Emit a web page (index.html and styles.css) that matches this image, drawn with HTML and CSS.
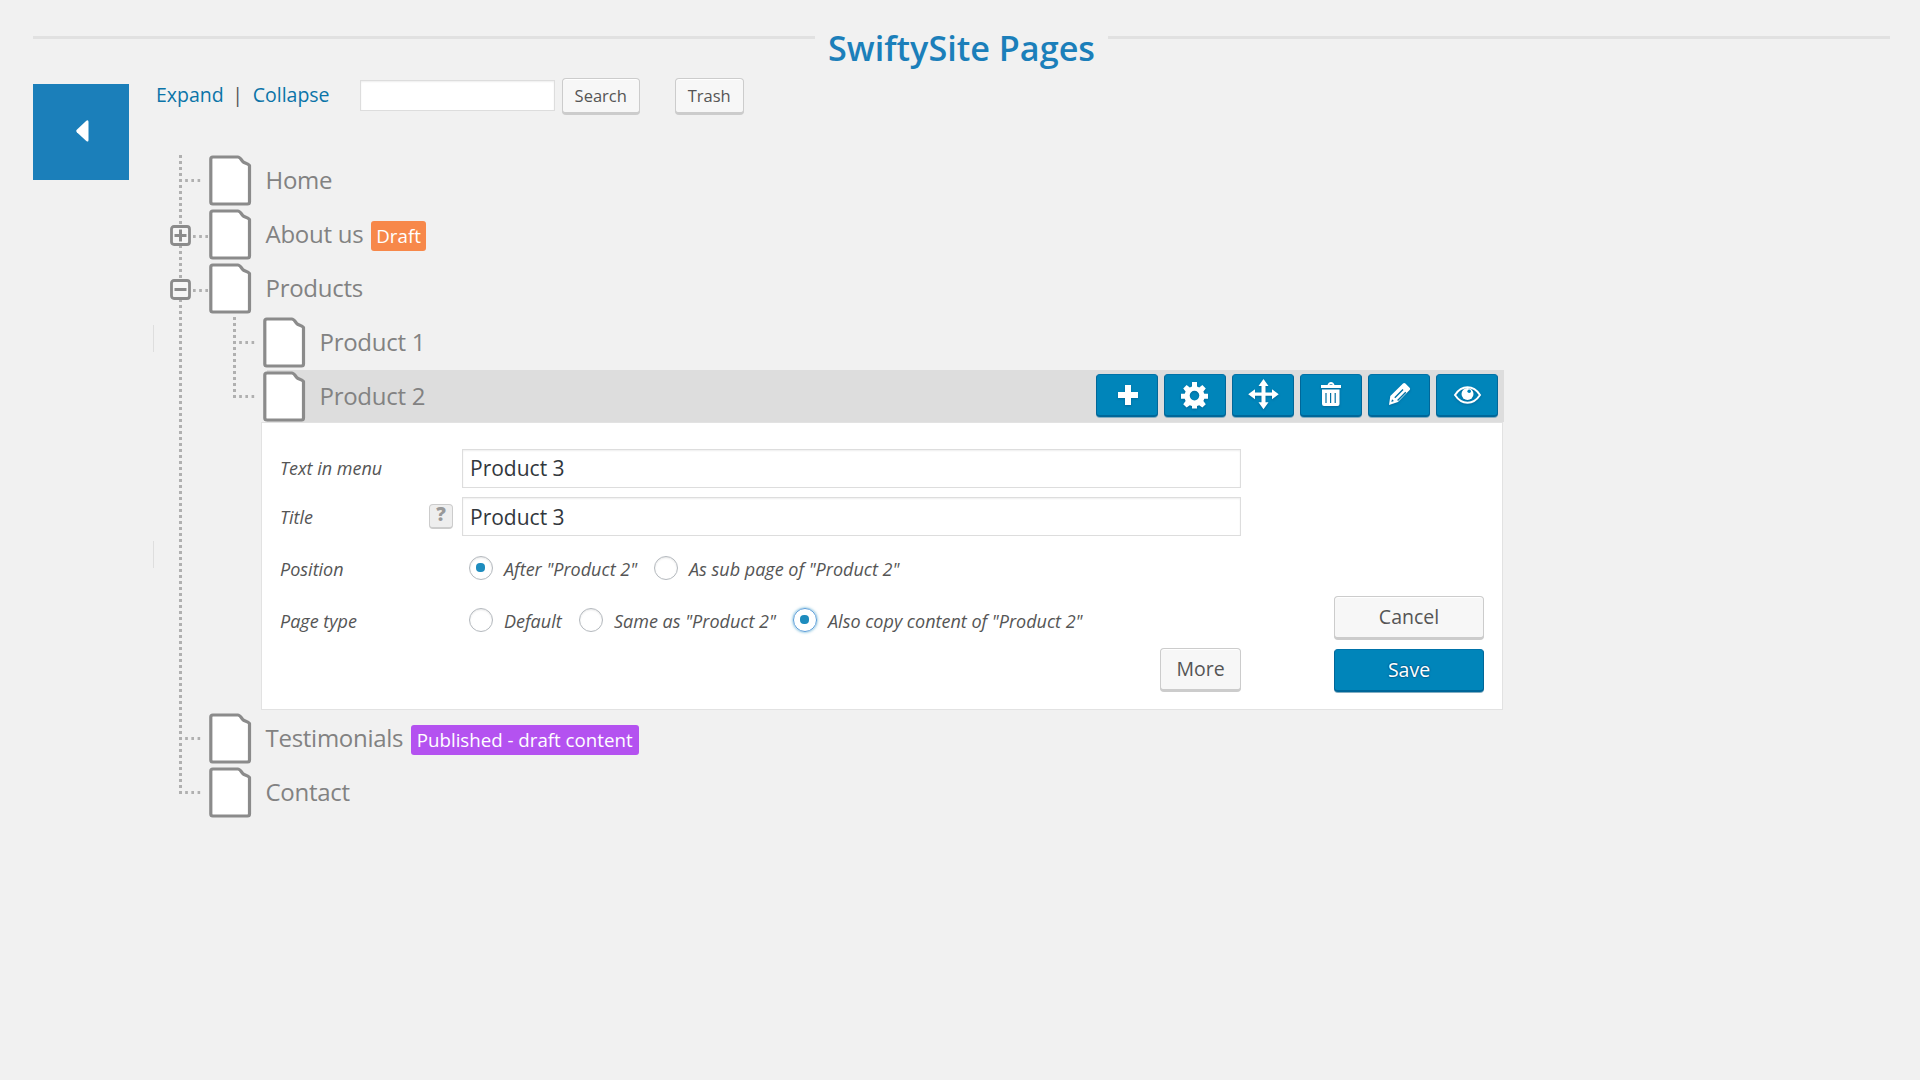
FILE: index.html
```html
<!DOCTYPE html>
<html lang="en">
<head>
<meta charset="utf-8">
<title>SwiftySite Pages</title>
<link rel="stylesheet" href="styles.css">
</head>
<body>
<svg class="sprite" aria-hidden="true">
  <symbol id="page" viewBox="0 0 44 52"><path d="M4.800 3H29.800C31.800 3 32.800 5 34.500 7.200C36.300 9.600 39.300 9 41.500 11.500V48Q41.500 50 39.500 50H4.800Q2.800 50 2.800 48V5Q2.800 3 4.800 3Z" fill="#fff" stroke="#8b8b8b" stroke-width="3.200" stroke-linejoin="round"/></symbol>
  <symbol id="plus" viewBox="0 0 21 21"><rect x="1.500" y="1.500" width="18" height="18" rx="2.500" fill="#f6f6f6" stroke="#8b8b8b" stroke-width="2.800"/><path d="M4.500 10.500h12M10.500 4.500v12" stroke="#8b8b8b" stroke-width="3"/></symbol>
  <symbol id="minus" viewBox="0 0 21 21"><rect x="1.500" y="1.500" width="18" height="18" rx="2.500" fill="#f6f6f6" stroke="#8b8b8b" stroke-width="2.800"/><path d="M4.500 10.500h12" stroke="#8b8b8b" stroke-width="3"/></symbol>
</svg>
<header class="header"><span class="rule"></span><h1>SwiftySite Pages</h1><span class="rule"></span></header>
<div class="layout">
  <a class="back"><svg width="13" height="22" viewBox="0 0 13 22"><path d="M.8 9.800L10.300.7Q12.500-.5 12.500 2V20Q12.500 22.500 10.300 21L.8 12.200Q-.3 11 .8 9.800Z" fill="#fff"/></svg></a>
  <main class="main">
    <div class="controls">
      <a class="link">Expand</a><span class="bar">|</span><a class="link">Collapse</a>
      <input class="search" type="text" aria-label="Search"><button class="btn small">Search</button><button class="btn small trash">Trash</button>
    </div>
    <ul class="tree">
      <li class="node"><div class="row"><span class="stub"></span><svg class="page"><use href="#page"/></svg><span class="name">Home</span></div></li>
      <li class="node"><div class="row"><svg class="toggle"><use href="#plus"/></svg><span class="stub after"></span><svg class="page"><use href="#page"/></svg><span class="name">About us</span><span class="tag draft">Draft</span></div></li>
      <li class="node open"><div class="row"><svg class="toggle shifted"><use href="#minus"/></svg><span class="stub after"></span><svg class="page"><use href="#page"/></svg><span class="name">Products</span></div>
        <ul class="children">
          <li class="node"><div class="row"><span class="stub"></span><svg class="page"><use href="#page"/></svg><span class="name">Product 1</span></div></li>
          <li class="node last"><div class="row"><span class="stub"></span>
            <div class="selected"><svg class="page"><use href="#page"/></svg><span class="name">Product 2</span>
              <div class="actions">
                <button class="btn primary icon"><svg viewBox="0 0 62 44"><path d="M29 11h6v7h7v6h-7v7h-6v-7h-7v-6h7z"/></svg></button>
                <button class="btn primary icon"><svg viewBox="0 0 62 44"><path fill-rule="evenodd" d="M28 8h5v4.500l2.200.9 3.200-2.400 3.400 3.400-2.400 3.200.9 2.200h3.700v5h-3.700l-.9 2.200 2.400 3.200-3.400 3.400-3.200-2.400-2.200.9v2.400h-5v-2.400l-2.200-.9-3.200 2.400-3.400-3.400 2.400-3.200-.9-2.200h-3.700v-5h3.700l.9-2.200-2.400-3.200 3.400-3.400 3.200 2.400 2.200-.9ZM30.500 16.800a4.800 4.800 0 1 0 0 9.600 4.800 4.800 0 0 0 0-9.600Z"/></svg></button>
                <button class="btn primary icon"><svg viewBox="0 0 62 44"><path d="M31.500 5l5 7h-3v6.500h6.500v-3.300l6.700 5-6.700 5v-3.400h-6.500v6.500h3l-5 7-5-7h3v-6.500h-6.500v3.400l-6.800-5 6.800-5v3.300h6.500V12h-3z"/></svg></button>
                <button class="btn primary icon"><svg viewBox="0 0 62 44"><path fill-rule="evenodd" d="M21 11h6.500q1-3 3.500-3t3.500 3H41v3H21ZM29 11h4q-2-1.600-4 0ZM22 15.500h17.500V30q0 2-2 2H24q-2 0-2-2ZM25.400 19v10h1.200V19Zm4.600 0v10h1.200V19Zm4.600 0v10h1.200V19Z"/></svg></button>
                <button class="btn primary icon"><svg viewBox="0 0 62 44"><path fill-rule="evenodd" d="M35 9.500q1.200-1 2.400 0l4.200 4.200q1 1.200 0 2.400L30 28 21 31l1.300-9ZM34.500 15l-8.200 8.300 1 1 8.200-8.300Zm2.800 2.800-8.200 8.200 1 1 8.200-8.200ZM24 25.200l-.6 2.800 2.500-1Z"/></svg></button>
                <button class="btn primary icon"><svg viewBox="0 0 62 44"><path d="M19 21q5-7.700 12.500-7.700T44 21q-5 7.700-12.500 7.700T19 21Z" fill="none" stroke="#fff" stroke-width="2"/><circle cx="31.500" cy="20" r="6"/><circle cx="33.200" cy="17.300" r="1.800" fill="#0083bb"/></svg></button>
              </div>
            </div></div>
            <form class="panel">
              <div class="fields">
                <div class="field"><label>Text in menu</label><input class="text" value="Product 3"></div>
                <div class="field title"><label>Title</label><span class="help">?</span><input class="text" value="Product 3"></div>
                <div class="field options position"><label>Position</label><span class="option o1"><i class="radio on"></i>After "Product 2"</span><span class="option"><i class="radio"></i>As sub page of "Product 2"</span></div>
                <div class="field options"><label>Page type</label><span class="option o2"><i class="radio"></i>Default</span><span class="option o3"><i class="radio"></i>Same as "Product 2"</span><span class="option"><i class="radio on focus"></i>Also copy content of "Product 2"</span></div>
                <button type="button" class="btn more">More</button>
              </div>
              <div class="submit"><button type="button" class="btn">Cancel</button><button type="button" class="btn primary">Save</button></div>
            </form>
          </li>
        </ul>
      </li>
      <li class="node"><div class="row"><span class="stub"></span><svg class="page"><use href="#page"/></svg><span class="name">Testimonials</span><span class="tag content">Published - draft content</span></div></li>
      <li class="node last"><div class="row"><span class="stub"></span><svg class="page"><use href="#page"/></svg><span class="name">Contact</span></div></li>
    </ul>
  </main>
</div>
</body>
</html>
```
FILE: styles.css
```css
* { box-sizing: border-box; }
body { margin: 0; background: #f1f1f1; color: #555; font-family: "Open Sans", sans-serif; height: 1080px; overflow: hidden; }
.sprite { position: absolute; width: 0; height: 0; }
.header { display: flex; align-items: flex-start; height: 84px; padding: 0 30px 0 33px; }
.rule { flex: 1; height: 3px; margin-top: 36px; background: #e1e1e1; }
h1 { width: 293px; margin: 25px 0 0; text-align: center; font-size: 34.200px; line-height: 46px; font-weight: 600; color: #1b7fba; white-space: nowrap; }
.layout { display: flex; padding-left: 33px; align-items: flex-start; }
.back { flex: none; width: 96px; height: 96px; padding: 36px 0 0 42.500px; background: #1b7fba; }
.back svg { display: block; }
.main { flex: 1; margin-top: -6px; }
.controls { display: flex; height: 76px; padding-left: 27px; font-size: 19.500px; line-height: 33px; }
.link { color: #0b74a8; }
.link:nth-of-type(2) { width: 107px; }
.bar { width: 29px; text-align: center; text-indent: -1px; }
input { border: 1px solid #ddd; background: #fff; box-shadow: inset 0 1px 2px rgba(0,0,0,.07); font-family: inherit; color: #32373c; outline: 0; }
.search { width: 195px; height: 31px; margin: 2px 7px 0 0; }
.btn { display: block; padding: 0 0 2px; border: 1px solid #ccc; border-radius: 4px; background: #f7f7f7; color: #555; box-shadow: inset 0 1px 0 #fff, 0 1px 0 #ccc; border-bottom-width: 2px; font-family: inherit; font-size: 19.500px; }
.small { width: 78px; height: 36px; padding: 0; font-size: 16.500px; }
.trash { width: 69px; margin-left: 35px; }
.primary { color: #fff; background: #0085ba; border-color: #0073aa #006799 #006799; box-shadow: 0 1px 0 #82adc2; text-shadow: 0 -1px 1px #006799, 1px 0 1px #006799, 0 1px 1px #006799, -1px 0 1px #006799; }
.tree, .children { margin: 0; padding: 0; list-style: none; }
.tree { padding-left: 26px; }
.node { position: relative; background: linear-gradient(#b0b0b0 3px, transparent 3px) 24px 1px / 3px 6px repeat-y; }
.node.last { background: none; }
.node.last::before { content: ""; position: absolute; left: 24px; top: 1px; width: 3px; height: 27px; background: linear-gradient(#b0b0b0 3px, transparent 3px) 0 0 / 3px 6px; }
.row { position: relative; display: flex; height: 54px; }
.stub { flex: none; width: 22px; height: 3px; margin: 25px 7px 0 24px; background: linear-gradient(90deg, #b0b0b0 3px, transparent 3px) 0 0 / 6.200px 3px; }
.toggle { width: 21px; height: 21px; margin: 17px 0 0 14.500px; background: #f1f1f1; flex: none; }
.toggle.shifted { margin-left: 15px; margin-right: -.5px; }
.stub.after { width: 15px; margin: 27px .5px 0 2px; }
.page { flex: none; width: 44px; height: 52px; margin-right: 13.500px; position: relative; z-index: 1; }
.name { font-size: 24px; letter-spacing: -.27px; line-height: 51px; color: #828282; white-space: nowrap; }
.tag { height: 30px; margin: 13px 0 0 7.500px; padding: 0 6px; border-radius: 3px; color: #fff; font-size: 18.700px; line-height: 30px; white-space: nowrap; }
.draft { background: #f7884a; padding: 0 5.500px; }
.content { background: #b452f0; }
.children { padding-left: 54px; }
.open::after { content: ""; position: absolute; left: -2px; top: 63px; width: 1px; height: 243px; background: linear-gradient(#dedede 27px, transparent 27px 216px, #dedede 216px); }
.selected { display: flex; width: 1242px; height: 52px; background: linear-gradient(90deg, transparent 5px, #ddd 5px); }
.actions { display: flex; gap: 6px; margin: 4px 6px 0 auto; }
.icon { width: 62px; height: 43px; overflow: hidden; }
.icon svg { display: block; width: 62px; height: 44px; margin: -1px; fill: #fff; filter: drop-shadow(0 1px 1px #006799); }
.panel { display: flex; width: 1242px; height: 288px; margin: -2px 0 2px 52px; border: 1px solid #e2e2e2; background: #fff; }
.fields { flex: none; width: 980px; padding: 26px 0 0 18px; }
.field { display: flex; height: 48px; font-size: 18px; font-style: italic; line-height: 39px; }
.field label { width: 182px; flex: none; }
.field .text { width: 779px; height: 39px; padding: 0 7px 1px; font-size: 21px; }
.title { line-height: 41px; }
.title label { width: 149px; }
.title .text { padding: 1px 7px 0; }
.help { width: 24px; height: 25px; margin: 7px 9px 0 0; border: 1px solid #ccc; border-bottom-width: 2px; border-radius: 4px; background: #eee; color: #999; font: 800 19px/19px "Open Sans", sans-serif; text-align: center; }
.options { height: 51px; padding-top: 8px; line-height: 31px; }
.options label { width: 189px; }
.options.position { padding-top: 9px; height: 53px; }
.option { display: flex; white-space: nowrap; }
.o1 { width: 185px; } .o2 { width: 110px; } .o3 { width: 214px; }
.radio { position: relative; width: 24px; height: 24px; margin: 2px 11px 0 0; border: 1px solid #b4b9be; border-radius: 50%; box-shadow: inset 0 1px 2px rgba(0,0,0,.1); }
.on::after { content: ""; position: absolute; left: 6px; top: 6px; width: 9px; height: 9px; border-radius: 4px; background: #1e8cbe; }
.focus { border-color: #5b9dd9; box-shadow: 0 0 3px rgba(30,140,190,.8); }
.more { width: 81px; height: 43px; margin: -1px 1px 0 auto; }
.submit { padding: 173px 0 0 92px; }
.submit .btn { width: 150px; height: 43px; margin-bottom: 10px; }
```
